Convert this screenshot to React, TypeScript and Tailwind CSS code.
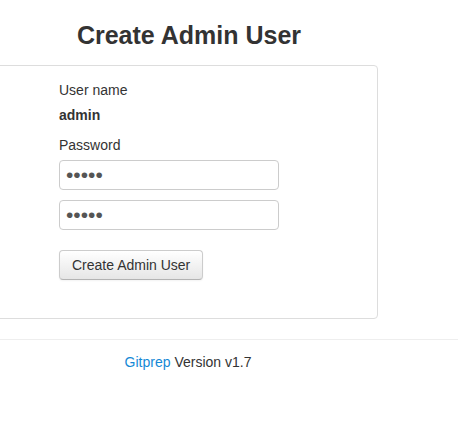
export default function App() {
  return (
    <div
      className="min-h-screen bg-white text-[14px] leading-5 text-[#333]"
      style={{ fontFamily: '"Liberation Sans", Arial, sans-serif' }}
    >
      <div className="w-[378px]">
        <h3 className="pt-[15px] pb-[10px] text-center text-[25px] font-bold leading-10">
          Create Admin User
        </h3>
        <div className="-ml-[4px] w-[382px] rounded border border-[#ddd] bg-white pb-[38px] pl-[62px] pt-[14px]">
          <div className="mb-[5px]">User name</div>
          <div className="mb-[10px] font-bold">admin</div>
          <div className="mb-[5px]">Password</div>
          <input
            type="password"
            defaultValue="admin"
            className="mb-[10px] block h-[30px] w-[220px] rounded border border-[#ccc] px-[6px] text-[21px] leading-none text-[#555] outline-none"
          />
          <input
            type="password"
            defaultValue="admin"
            className="mb-[20px] block h-[30px] w-[220px] rounded border border-[#ccc] px-[6px] text-[21px] leading-none text-[#555] outline-none"
          />
          <button className="h-[30px] rounded border border-[#ccc] border-b-[#b3b3b3] bg-gradient-to-b from-white to-[#e6e6e6] px-[12px] text-[14px] text-[#333] shadow-[inset_0_1px_0_rgba(255,255,255,0.2),0_1px_2px_rgba(0,0,0,0.05)]">
            Create Admin User
          </button>
        </div>
      </div>
      <div className="mt-[20px] border-t border-[#eee] pt-[12px]">
        <div className="w-[376px] text-center">
          <a href="#" className="text-[#1589d6]">
            Gitprep
          </a>{" "}
          Version v1.7
        </div>
      </div>
    </div>
  );
}
